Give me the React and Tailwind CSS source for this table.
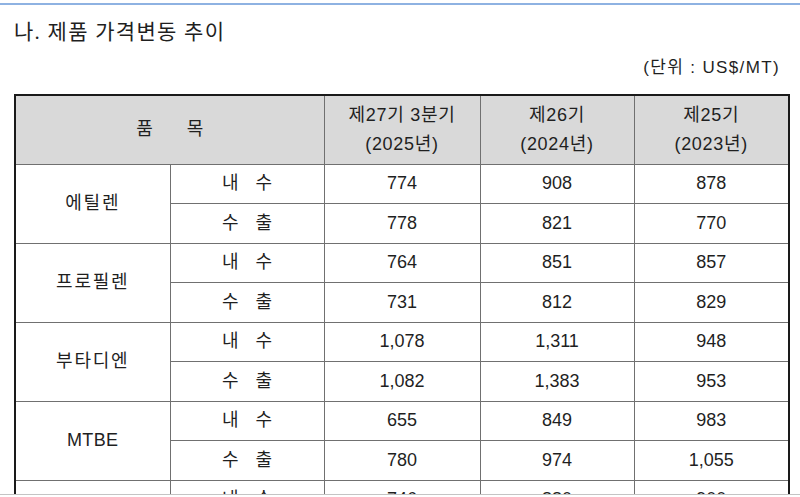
const groups = [
  { name: '에틸렌', rows: [['내 수', '774', '908', '878'], ['수 출', '778', '821', '770']] },
  { name: '프로필렌', rows: [['내 수', '764', '851', '857'], ['수 출', '731', '812', '829']] },
  { name: '부타디엔', rows: [['내 수', '1,078', '1,311', '948'], ['수 출', '1,082', '1,383', '953']] },
  { name: 'MTBE', rows: [['내 수', '655', '849', '983'], ['수 출', '780', '974', '1,055']] },
  { name: 'SM', rows: [['내 수', '746', '880', '900'], ['수 출', '752', '870', '905']] },
];

const cell = 'border border-[#707070] text-center align-middle';

export default function App() {
  return (
    <div
      className="w-[800px] h-[497px] bg-white text-[#1f1f1f] flex flex-col"
      style={{ fontFamily: '"Liberation Sans", "Noto Sans CJK KR", sans-serif' }}
    >
      <div className="h-[3px]" />
      <div className="h-[2px] bg-[#8eb2e2]" />
      <div className="h-[489px] overflow-hidden">
        <div className="pl-[14px] pt-[13px] text-[21px] leading-[28px] tracking-[0.06em]" style={{ fontFamily: '"Liberation Serif", "Noto Sans CJK KR", serif' }}>
          나. 제품 가격변동 추이
        </div>
        <div className="text-right pr-[20px] mt-[11px] text-[17px] leading-[22px] tracking-[0.08em] mb-[-1px]">(단위 : US$/MT)</div>
        <table className="ml-[14px] mt-[16px] w-[774px] border-collapse border-2 border-[#1a1a1a] text-[18px] table-fixed">
          <colgroup>
            <col className="w-[155px]" />
            <col className="w-[154px]" />
            <col className="w-[156px]" />
            <col className="w-[154px]" />
            <col className="w-[155px]" />
          </colgroup>
          <thead>
            <tr className="h-[69px] bg-[#d9d9d9]">
              <th colSpan={2} className={`${cell} font-normal`}>
                <span>품</span>
                <span className="ml-[34px]">목</span>
              </th>
              <th className={`${cell} font-normal leading-[29px] tracking-[0.04em]`}>제27기 3분기<br />(2025년)</th>
              <th className={`${cell} font-normal leading-[29px] tracking-[0.04em]`}>제26기<br />(2024년)</th>
              <th className={`${cell} font-normal leading-[29px] tracking-[0.04em]`}>제25기<br />(2023년)</th>
            </tr>
          </thead>
          <tbody>
            {groups.map((g) =>
              g.rows.map((r, i) => (
                <tr key={g.name + i} className="h-[39.5px]">
                  {i === 0 && (
                    <td rowSpan={2} className={`${cell} ${g.name === 'MTBE' ? 'tracking-[0.02em]' : 'tracking-[0.1em]'}`}>{g.name}</td>
                  )}
                  <td className={cell}>
                    <span>{r[0].split(' ')[0]}</span>
                    <span className="ml-[17px]">{r[0].split(' ')[1]}</span>
                  </td>
                  <td className={cell}>{r[1]}</td>
                  <td className={cell}>{r[2]}</td>
                  <td className={cell}>{r[3]}</td>
                </tr>
              ))
            )}
          </tbody>
        </table>
      </div>
      <div className="h-[1px] bg-[#c4c4c4]" />
      <div className="h-[2px]" />
    </div>
  );
}
